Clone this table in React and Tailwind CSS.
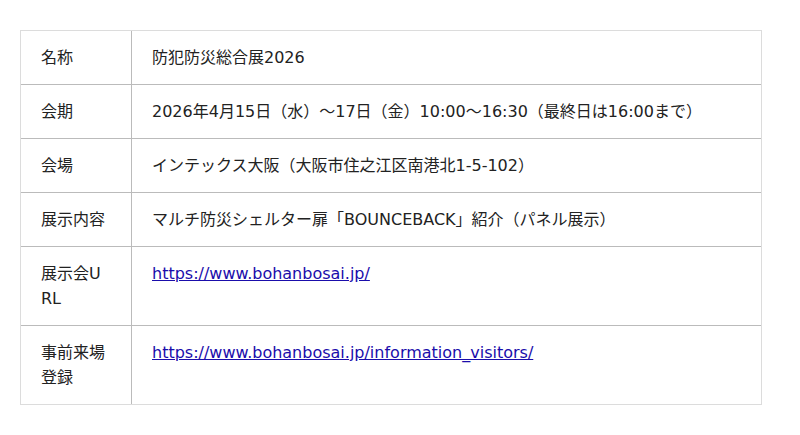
import React from "react";

const rows = [
  { label: "名称", value: "防犯防災総合展2026" },
  { label: "会期", value: "2026年4月15日（水）～17日（金）10:00～16:30（最終日は16:00まで）" },
  { label: "会場", value: "インテックス大阪（大阪市住之江区南港北1-5-102）" },
  { label: "展示内容", value: "マルチ防災シェルター扉「BOUNCEBACK」紹介（パネル展示）" },
  { label: "展示会URL", link: "https://www.bohanbosai.jp/" },
  { label: "事前来場登録", link: "https://www.bohanbosai.jp/information_visitors/" },
];

export default function App() {
  return (
    <div
      className="bg-white w-[800px] h-[435px] pt-[30px] pl-[20px] text-[#222] text-[16px] leading-[25px]"
      style={{ fontFamily: '"DejaVu Sans", "Noto Sans CJK JP", sans-serif' }}
    >
      <table className="w-[742px] table-fixed border-separate border-spacing-0 border border-[#dcdcdc]">
        <tbody>
          {rows.map((row, i) => {
            const last = i === rows.length - 1;
            return (
              <tr key={row.label}>
                <td
                  className={
                    "w-[111px] align-top pl-5 pr-[24px] py-[14px] break-all border-r border-[#bbb] " +
                    (last ? "" : "border-b")
                  }
                >
                  {row.label}
                </td>
                <td className={"align-top px-5 py-[14px] border-[#bbb] " + (last ? "" : "border-b")}>
                  {row.link ? (
                    <a href={row.link} className="text-[#1a0dab] underline">
                      {row.link}
                    </a>
                  ) : (
                    row.value
                  )}
                </td>
              </tr>
            );
          })}
        </tbody>
      </table>
    </div>
  );
}
